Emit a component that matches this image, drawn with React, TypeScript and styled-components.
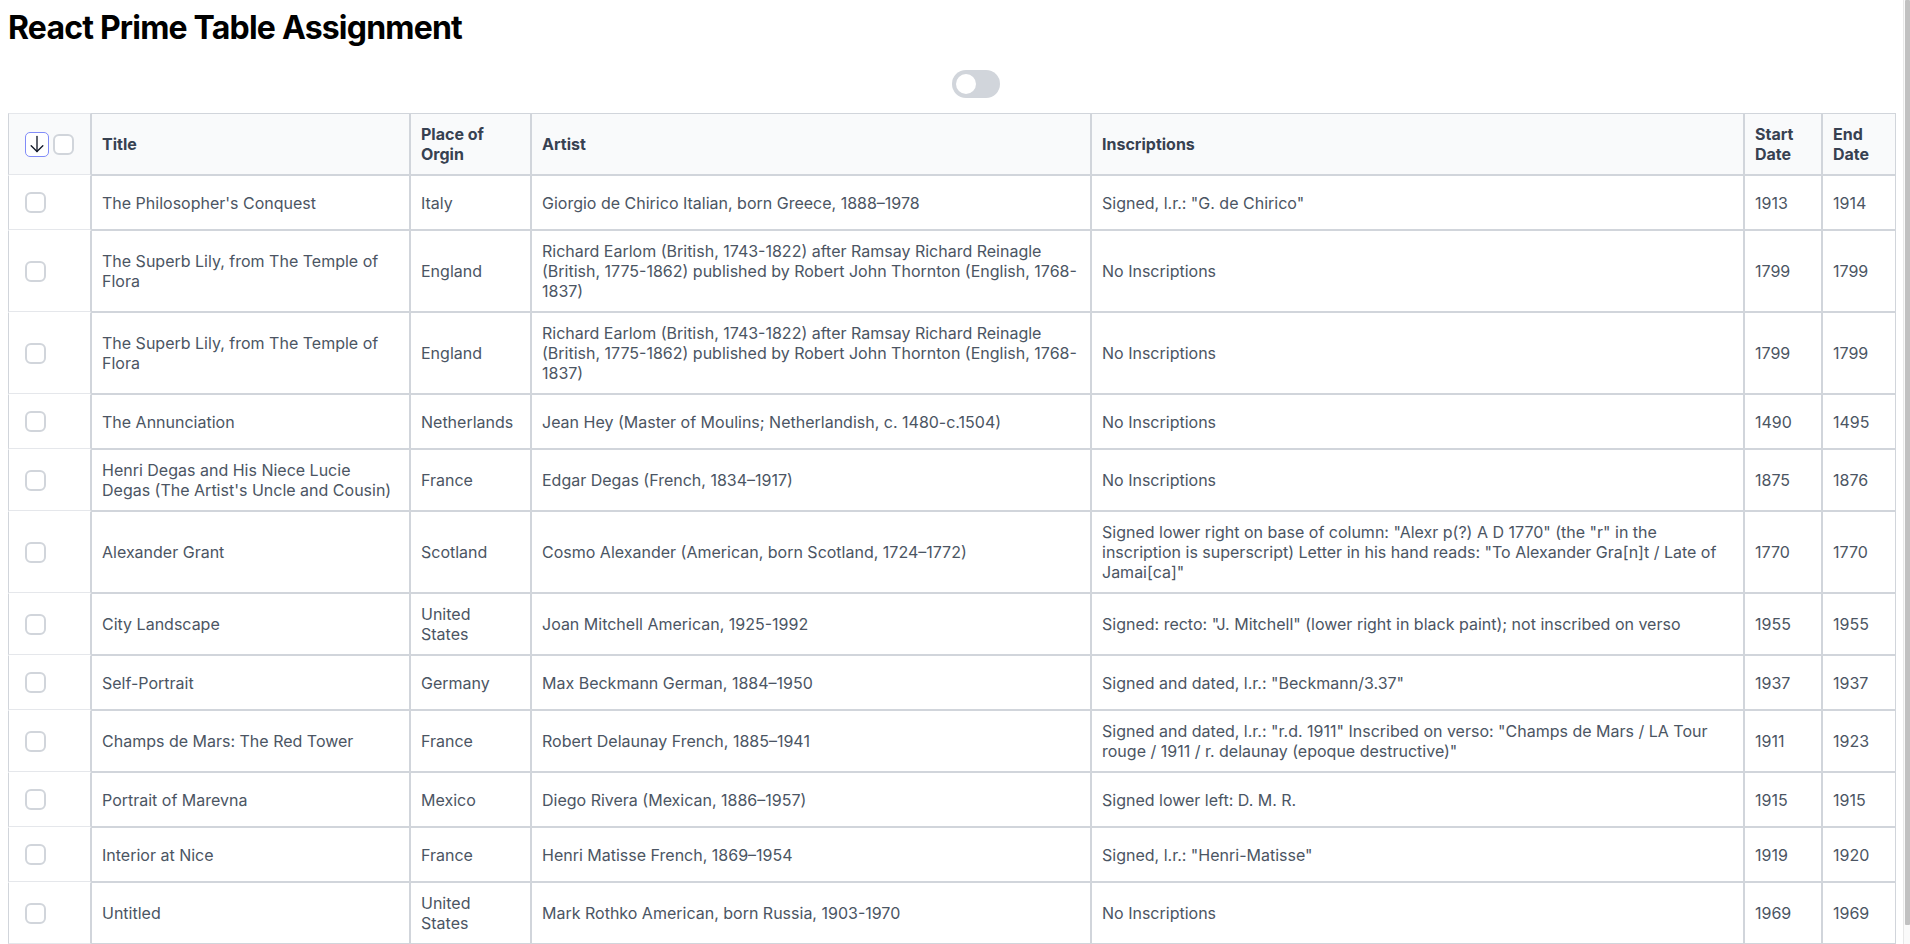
import React from "react";
import styled, { createGlobalStyle } from "styled-components";

const GlobalStyle = createGlobalStyle`
  *, *::before, *::after { box-sizing: border-box; }
  html, body { background: #ffffff; }
  body {
    margin: 8px 14px 8px 8px;
    font-family: Inter, "Noto Sans", sans-serif;
    color: #4b5563;
  }
`;

const Page = styled.div`
  display: flex;
  flex-direction: column;
`;

const ScrollRail = styled.div`
  position: fixed;
  top: 0;
  right: 0;
  bottom: 0;
  width: 7px;
  border-left: 1px solid #e8e8e8;
  background: #fafafa;
  pointer-events: none;
`;

const ScrollThumb = styled.div`
  margin-left: 1px;
  width: 5px;
  height: 925px;
  background: #c1c1c1;
  border-radius: 1px;
`;

const Heading = styled.h1`
  margin: 0;
  font-family: Inter, "Noto Sans", sans-serif;
  font-size: 32px;
  font-weight: 700;
  letter-spacing: -0.8px;
  line-height: 39px;
  color: #000000;
`;

const Toolbar = styled.div`
  display: flex;
  justify-content: center;
  margin: 23px 0 15px;
`;

const SwitchTrack = styled.button<{ $on: boolean }>`
  margin-left: 48px;
  width: 48px;
  height: 28px;
  padding: 0 4px;
  border: none;
  border-radius: 14px;
  background: ${(p) => (p.$on ? "#6366f1" : "#d1d5db")};
  display: flex;
  align-items: center;
  justify-content: ${(p) => (p.$on ? "flex-end" : "flex-start")};
  cursor: pointer;
`;

const SwitchKnob = styled.span`
  width: 20px;
  height: 20px;
  border-radius: 50%;
  background: #ffffff;
`;

const Table = styled.table`
  width: 100%;
  table-layout: fixed;
  border-collapse: separate;
  border-spacing: 0;
  font-size: 16px;
  line-height: 20px;
`;

const HeadCell = styled.th<{ $w?: number }>`
  width: ${(p) => (p.$w ? `${p.$w}px` : "auto")};
  padding: 10px;
  background: #f9fafb;
  border: 1px solid #d1d5db;
  text-align: left;
  font-weight: 700;
  color: #374151;
  vertical-align: middle;
`;

const SelectHeadCell = styled(HeadCell)`
  padding: 0 0 0 16px;
  border-color: #e5e7eb #d1d5db #e5e7eb #d1d5db;
`;

const HeadControls = styled.div`
  display: flex;
  align-items: center;
  gap: 4px;
`;

const Cell = styled.td`
  padding: 10px;
  border: 1px solid #d1d5db;
  vertical-align: middle;
  color: #4b5563;
  overflow-wrap: break-word;
`;

const SelectCell = styled.td`
  padding: 16px 0 16px 16px;
  border: 1px solid #d1d5db;
  border-top-color: #ffffff;
  border-bottom-color: #e5e7eb;
  vertical-align: middle;
`;

const Box = styled.span`
  display: block;
  width: 21px;
  height: 21px;
  border: 2px solid #d1d5db;
  border-radius: 6px;
  background: #ffffff;
`;

const ArrowButton = styled.button`
  width: 24px;
  height: 25px;
  padding: 0;
  border: 1px solid #818cf8;
  border-radius: 5px;
  background: #ffffff;
  display: flex;
  align-items: center;
  justify-content: center;
  cursor: pointer;
`;

type Row = {
  title: string;
  place: string;
  artist: string;
  inscriptions: string;
  start: number;
  end: number;
};

const rows: Row[] = [
  {
    title: "The Philosopher's Conquest",
    place: "Italy",
    artist: "Giorgio de Chirico Italian, born Greece, 1888–1978",
    inscriptions: 'Signed, l.r.: "G. de Chirico"',
    start: 1913,
    end: 1914,
  },
  {
    title: "The Superb Lily, from The Temple of Flora",
    place: "England",
    artist:
      "Richard Earlom (British, 1743-1822) after Ramsay Richard Reinagle (British, 1775-1862) published by Robert John Thornton (English, 1768-1837)",
    inscriptions: "No Inscriptions",
    start: 1799,
    end: 1799,
  },
  {
    title: "The Superb Lily, from The Temple of Flora",
    place: "England",
    artist:
      "Richard Earlom (British, 1743-1822) after Ramsay Richard Reinagle (British, 1775-1862) published by Robert John Thornton (English, 1768-1837)",
    inscriptions: "No Inscriptions",
    start: 1799,
    end: 1799,
  },
  {
    title: "The Annunciation",
    place: "Netherlands",
    artist: "Jean Hey (Master of Moulins; Netherlandish, c. 1480-c.1504)",
    inscriptions: "No Inscriptions",
    start: 1490,
    end: 1495,
  },
  {
    title: "Henri Degas and His Niece Lucie Degas (The Artist's Uncle and Cousin)",
    place: "France",
    artist: "Edgar Degas (French, 1834–1917)",
    inscriptions: "No Inscriptions",
    start: 1875,
    end: 1876,
  },
  {
    title: "Alexander Grant",
    place: "Scotland",
    artist: "Cosmo Alexander (American, born Scotland, 1724–1772)",
    inscriptions:
      'Signed lower right on base of column: "Alexr p(?) A D 1770" (the "r" in the inscription is superscript) Letter in his hand reads: "To Alexander Gra[n]t / Late of Jamai[ca]"',
    start: 1770,
    end: 1770,
  },
  {
    title: "City Landscape",
    place: "United States",
    artist: "Joan Mitchell American, 1925-1992",
    inscriptions:
      'Signed: recto: "J. Mitchell" (lower right in black paint); not inscribed on verso',
    start: 1955,
    end: 1955,
  },
  {
    title: "Self-Portrait",
    place: "Germany",
    artist: "Max Beckmann German, 1884–1950",
    inscriptions: 'Signed and dated, l.r.: "Beckmann/3.37"',
    start: 1937,
    end: 1937,
  },
  {
    title: "Champs de Mars: The Red Tower",
    place: "France",
    artist: "Robert Delaunay French, 1885–1941",
    inscriptions:
      'Signed and dated, l.r.: "r.d. 1911" Inscribed on verso: "Champs de Mars / LA Tour rouge / 1911 / r. delaunay (epoque destructive)"',
    start: 1911,
    end: 1923,
  },
  {
    title: "Portrait of Marevna",
    place: "Mexico",
    artist: "Diego Rivera (Mexican, 1886–1957)",
    inscriptions: "Signed lower left: D. M. R.",
    start: 1915,
    end: 1915,
  },
  {
    title: "Interior at Nice",
    place: "France",
    artist: "Henri Matisse French, 1869–1954",
    inscriptions: 'Signed, l.r.: "Henri-Matisse"',
    start: 1919,
    end: 1920,
  },
  {
    title: "Untitled",
    place: "United States",
    artist: "Mark Rothko American, born Russia, 1903-1970",
    inscriptions: "No Inscriptions",
    start: 1969,
    end: 1969,
  },
];

const ArrowDown = () => (
  <svg width="20" height="20" viewBox="0 0 24 24" fill="none" stroke="#111827" strokeWidth="1.6" strokeLinecap="round" strokeLinejoin="round">
    <path d="M12 3v18" />
    <path d="M5 14l7 7 7-7" />
  </svg>
);

export default function App() {
  const [on, setOn] = React.useState(false);
  return (
    <Page>
      <GlobalStyle />
      <ScrollRail>
        <ScrollThumb />
      </ScrollRail>
      <Heading>React Prime Table Assignment</Heading>
      <Toolbar>
        <SwitchTrack $on={on} onClick={() => setOn(!on)} aria-label="toggle">
          <SwitchKnob />
        </SwitchTrack>
      </Toolbar>
      <Table>
        <thead>
          <tr>
            <SelectHeadCell $w={83}>
              <HeadControls>
                <ArrowButton aria-label="select rows">
                  <ArrowDown />
                </ArrowButton>
                <Box />
              </HeadControls>
            </SelectHeadCell>
            <HeadCell $w={319}>Title</HeadCell>
            <HeadCell $w={121}>Place of Orgin</HeadCell>
            <HeadCell $w={560}>Artist</HeadCell>
            <HeadCell $w={653}>Inscriptions</HeadCell>
            <HeadCell $w={78}>Start Date</HeadCell>
            <HeadCell>End Date</HeadCell>
          </tr>
        </thead>
        <tbody>
          {rows.map((r, i) => (
            <tr key={i}>
              <SelectCell>
                <Box />
              </SelectCell>
              <Cell>{r.title}</Cell>
              <Cell>{r.place}</Cell>
              <Cell>{r.artist}</Cell>
              <Cell>{r.inscriptions}</Cell>
              <Cell>{r.start}</Cell>
              <Cell>{r.end}</Cell>
            </tr>
          ))}
        </tbody>
      </Table>
    </Page>
  );
}
